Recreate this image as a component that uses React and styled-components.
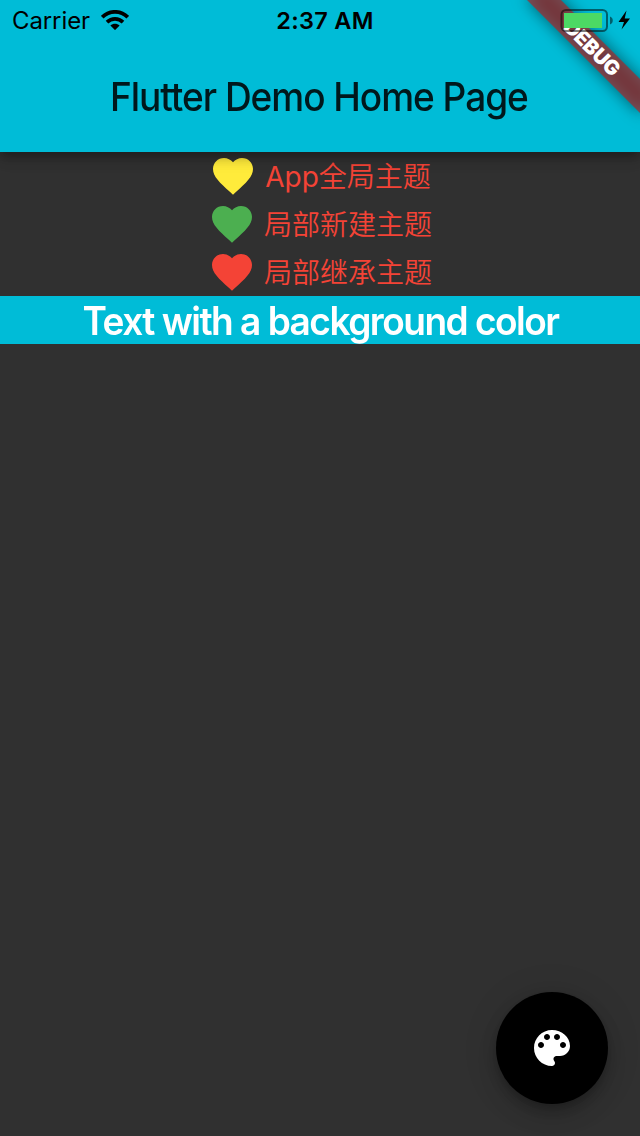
import React from 'react';
import styled, { createGlobalStyle } from 'styled-components';

const GlobalStyle = createGlobalStyle`
  * { box-sizing: border-box; }
  body { margin: 0; background: #303030; font-family: Inter, "Noto Sans CJK SC", sans-serif; }
`;

const Screen = styled.div`
  position: relative;
  display: flex;
  flex-direction: column;
  height: 1136px;
  overflow: hidden;
  background: #303030;
`;

const Header = styled.header`
  position: relative;
  z-index: 1;
  flex: none;
  height: 152px;
  background: #00bcd7;
  box-shadow: 0 4px 8px -2px rgba(0, 0, 0, 0.2), 0 8px 10px rgba(0, 0, 0, 0.14), 0 2px 20px rgba(0, 0, 0, 0.12);
`;

const StatusBar = styled.div`
  position: relative;
  z-index: 2;
  display: grid;
  grid-template-columns: 1fr auto 1fr;
  align-items: center;
  height: 40px;
  padding: 0 9px 0 12px;
  color: #000;
  font-size: 24px;
  line-height: 38px;
`;

const Carrier = styled.div`
  display: flex;
  align-items: center;
  gap: 11px;
  padding-top: 2px;
  letter-spacing: -0.1px;

  svg { margin-top: -2px; }
`;

const Clock = styled.div`
  padding: 2px 0 0 7px;
  font-weight: 600;
  font-size: 23.5px;
  letter-spacing: 0.3px;
`;

const Power = styled.div`
  display: flex;
  justify-content: flex-end;
  align-items: center;
`;

const Title = styled.h1`
  display: flex;
  justify-content: center;
  align-items: center;
  height: 112px;
  margin: 0;
  padding-right: 3px;
  color: rgba(0, 0, 0, 0.87);
  font-size: 39px;
  font-weight: 500;
  letter-spacing: -1.1px;
  white-space: nowrap;
`;

const Condensed = styled.span`
  transform: scaleX(0.95);
`;

const Ribbon = styled.div`
  position: absolute;
  z-index: 1;
  top: 36px;
  left: 512px;
  width: 160px;
  height: 24px;
  transform: rotate(45deg);
  color: #fff;
  font-size: 20.4px;
  font-weight: 900;
  line-height: 24px;
  letter-spacing: -0.3px;
  text-align: center;

  &::before,
  &::after {
    content: '';
    position: absolute;
    z-index: -1;
    inset: 0;
  }
  &::before {
    background: rgba(0, 0, 0, 0.5);
    filter: blur(8px);
  }
  &::after { background: rgba(183, 28, 28, 0.63); }
`;

const ThemeRow = styled.div`
  display: flex;
  justify-content: center;
  align-items: center;
  gap: 8px;
  height: 48px;
  color: #f44336;
  font-size: 28px;
  line-height: 46px;
  white-space: nowrap;
`;

const Label = styled.span`
  padding-top: 2px;
  font-weight: 350;
`;

const Latin = styled.span`
  font-weight: 400;
`;

const Highlight = styled.div`
  display: flex;
  justify-content: center;
  align-items: center;
  height: 48px;
  background: #00bcd7;
  color: #fff;
  font-size: 39px;
  font-weight: 560;
  letter-spacing: -1.6px;
  white-space: nowrap;
`;

const Fab = styled.button`
  position: absolute;
  right: 32px;
  bottom: 32px;
  display: flex;
  justify-content: center;
  align-items: center;
  width: 112px;
  height: 112px;
  padding: 0;
  border: 0;
  border-radius: 50%;
  background: #000;
  color: #fff;
  box-shadow: 0 6px 10px -2px rgba(0, 0, 0, 0.2), 0 12px 20px rgba(0, 0, 0, 0.14), 0 2px 36px rgba(0, 0, 0, 0.12);
`;

const Heart = ({ color }) => (
  <svg width="48" height="48" viewBox="0 0 24 24" fill={color}>
    <path d="M12 21.35l-1.45-1.32C5.4 15.36 2 12.28 2 8.5 2 5.42 4.42 3 7.5 3c1.74 0 3.41.81 4.5 2.09C13.09 3.81 14.76 3 16.5 3 19.58 3 22 5.42 22 8.5c0 3.78-3.4 6.86-8.55 11.54L12 21.35z" />
  </svg>
);

const Wifi = () => (
  <svg width="28" height="20" viewBox="0 0 28 20" fill="none" stroke="#000">
    <path d="M1.2 7.2C8.3 0 19.7 0 26.8 7.2" strokeWidth="3.7" />
    <path d="M6 12.1C10.5 7.7 17.5 7.7 22 12.1" strokeWidth="3.7" />
    <path d="M9.4 15.6C12 13.2 16 13.2 18.6 15.6L14 20.1Z" fill="#000" stroke="none" />
  </svg>
);

const Battery = () => (
  <svg width="71" height="24" viewBox="0 0 71 24">
    <rect x="1.5" y="2" width="45.5" height="21" rx="4.5" fill="none" stroke="#000" strokeOpacity="0.5" strokeWidth="2" />
    <rect x="4" y="5" width="38" height="15" fill="#4cd964" />
    <path d="M50 8.5C53.7 9.7 53.7 15.3 50 16.5Z" fill="#000" fillOpacity="0.5" />
    <path d="M66.5 2.5L58.5 14H64L61.5 21.5L70 10.5H64.7Z" fill="#000" />
  </svg>
);

const Palette = () => (
  <svg width="48" height="48" viewBox="0 0 24 24" fill="currentColor">
    <path d="M12 3c-4.97 0-9 4.03-9 9s4.03 9 9 9c.83 0 1.5-.67 1.5-1.5 0-.39-.15-.74-.39-1.01-.23-.26-.38-.61-.38-.99 0-.83.67-1.5 1.5-1.5H16c2.76 0 5-2.24 5-5 0-4.42-4.03-8-9-8zm-5.5 9c-.83 0-1.5-.67-1.5-1.5S5.67 9 6.5 9 8 9.67 8 10.5 7.33 12 6.5 12zm3-4C8.67 8 8 7.33 8 6.5S8.67 5 9.5 5s1.5.67 1.5 1.5S10.33 8 9.5 8zm5 0c-.83 0-1.5-.67-1.5-1.5S13.67 5 14.5 5s1.5.67 1.5 1.5S15.33 8 14.5 8zm3 4c-.83 0-1.5-.67-1.5-1.5S16.67 9 17.5 9s1.5.67 1.5 1.5-.67 1.5-1.5 1.5z" />
  </svg>
);

export default function App() {
  return (
    <Screen>
      <GlobalStyle />
      <Header>
        <StatusBar>
          <Carrier>Carrier<Wifi /></Carrier>
          <Clock>2:37 AM</Clock>
          <Power><Battery /></Power>
        </StatusBar>
        <Title><Condensed>Flutter Demo Home Page</Condensed></Title>
        <Ribbon>DEBUG</Ribbon>
      </Header>
      <main>
        <ThemeRow><Heart color="#ffeb3b" /><Label><Latin>App</Latin>全局主题</Label></ThemeRow>
        <ThemeRow><Heart color="#4caf50" /><Label>局部新建主题</Label></ThemeRow>
        <ThemeRow><Heart color="#f44336" /><Label>局部继承主题</Label></ThemeRow>
        <Highlight><Condensed>Text with a background color</Condensed></Highlight>
      </main>
      <Fab aria-label="Change theme"><Palette /></Fab>
    </Screen>
  );
}
